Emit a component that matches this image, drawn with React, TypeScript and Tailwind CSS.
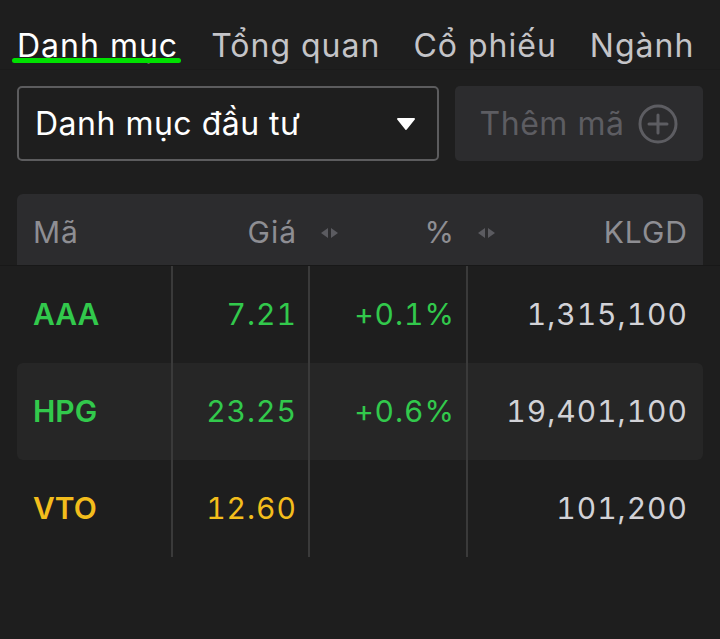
const tabs = ["Danh mục", "Tổng quan", "Cổ phiếu", "Ngành"];

type Row = {
  code: string;
  price: string;
  change: string;
  volume: string;
  color: string;
  shaded?: boolean;
};

const rows: Row[] = [
  { code: "AAA", price: "7.21", change: "+0.1%", volume: "1,315,100", color: "text-[#32c94c]" },
  { code: "HPG", price: "23.25", change: "+0.6%", volume: "19,401,100", color: "text-[#32c94c]", shaded: true },
  { code: "VTO", price: "12.60", change: "", volume: "101,200", color: "text-[#f3bd1c]" },
];

function SortArrows() {
  return (
    <svg width="20" height="12" viewBox="0 0 20 12" className="shrink-0">
      <path d="M8 1 L1 6 L8 11 Z" fill="#5b5b60" />
      <path d="M11 1 L18 6 L11 11 Z" fill="#5b5b60" />
    </svg>
  );
}

export default function App() {
  return (
    <div
      className="min-h-[639px] w-[720px] bg-[#1e1e1e] text-white"
      style={{ fontFamily: "Inter, 'Noto Sans', sans-serif" }}
    >
      {/* tabs */}
      <div className="flex h-[70px] items-start gap-[33px] border-b border-[#1b1b1b] pl-[17px] pt-[26px]">
        {tabs.map((t, i) => (
          <div key={t} className="relative">
            <span
              className={
                "text-[32px] leading-[40px] tracking-[1px] " +
                (i === 0 ? "text-white" : "text-[#c4c4c8]")
              }
            >
              {t}
            </span>
            {i === 0 && (
              <div className="absolute left-[-5px] right-[-3px] top-[32px] h-[5px] rounded-full bg-[#00e000]" />
            )}
          </div>
        ))}
      </div>

      {/* controls */}
      <div className="mt-[16px] flex gap-[16px] px-[17px]">
        <div className="flex h-[75px] w-[422px] items-center justify-between rounded-[5px] border-2 border-[#5c5c5e] pl-[16px] pr-[21px]">
          <span className="text-[32px] tracking-[0.5px]">Danh mục đầu tư</span>
          <svg width="20" height="14" viewBox="0 0 20 14">
            <path d="M2 2 L18 2 L10 12 Z" fill="#fff" stroke="#fff" strokeWidth="2" strokeLinejoin="round" />
          </svg>
        </div>
        <div className="flex h-[75px] flex-1 items-center justify-center gap-[14px] rounded-[5px] bg-[#2c2c2e]">
          <span className="text-[32px] tracking-[0.5px] text-[#5d5d62]">Thêm mã</span>
          <svg width="40" height="40" viewBox="0 0 40 40">
            <circle cx="20" cy="20" r="18" fill="none" stroke="#5d5d62" strokeWidth="3" />
            <path d="M20 11 V29 M11 20 H29" stroke="#5d5d62" strokeWidth="3" strokeLinecap="round" />
          </svg>
        </div>
      </div>

      {/* table header */}
      <div className="mt-[33px] border-b border-[#181818]">
        <div className="mx-[17px] grid h-[71px] grid-cols-[156px_137px_158px_1fr] items-center rounded-t-[6px] bg-[#2c2c2e] pt-[6px] text-[30px] tracking-[1px] text-[#8e8e93]">
          <div className="pl-[16px]">Mã</div>
          <div className="pr-[13px] text-right">Giá</div>
          <div className="flex items-center justify-between pl-[10px] pr-[13px]">
            <SortArrows />
            <span>%</span>
          </div>
          <div className="flex items-center justify-between pl-[9px] pr-[15px]">
            <SortArrows />
            <span>KLGD</span>
          </div>
        </div>
      </div>

      {/* rows */}
      <div className="mx-[17px]">
        {rows.map((r) => (
          <div
            key={r.code}
            className={
              "grid h-[97px] grid-cols-[156px_137px_158px_1fr] text-[30px] " +
              (r.shaded ? "rounded-[6px] bg-[#262626]" : "")
            }
          >
            <div className={"flex items-center border-r-2 border-[#3a3a3a] pl-[16px] font-semibold " + r.color}>
              {r.code}
            </div>
            <div className={"flex items-center justify-end border-r-2 border-[#3a3a3a] pr-[11px] tracking-[1px] tabular-nums " + r.color}>
              {r.price}
            </div>
            <div className={"flex items-center justify-end border-r-2 border-[#3a3a3a] pr-[11px] tracking-[1px] tabular-nums " + r.color}>
              {r.change}
            </div>
            <div className="flex items-center justify-end pr-[15px] tracking-[1px] tabular-nums text-[#d2d2d7]">
              {r.volume}
            </div>
          </div>
        ))}
      </div>
    </div>
  );
}
